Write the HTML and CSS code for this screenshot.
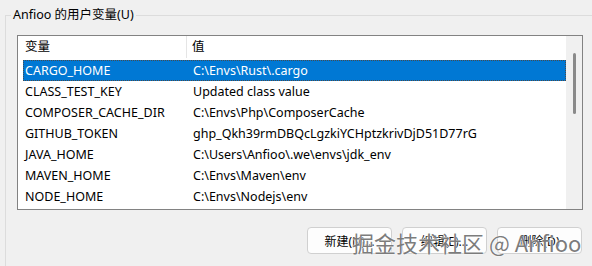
FILE: index.html
```html
<!DOCTYPE html>
<html lang="zh-CN">
<head>
<meta charset="utf-8">
<link rel="stylesheet" href="styles.css">
</head>
<body>
<fieldset class="group">
  <legend class="group-title">Anfioo 的用户变量(U)</legend>
  <div class="inner">
    <div class="list">
      <div class="list-main">
        <div class="list-head">
          <div class="hcell c1">变量</div>
          <div class="hcell c2">值</div>
        </div>
        <div class="rows">
          <div class="row sel"><span class="c1">CARGO_HOME</span><span class="c2">C:\Envs\Rust\.cargo</span></div>
          <div class="row"><span class="c1">CLASS_TEST_KEY</span><span class="c2">Updated class value</span></div>
          <div class="row"><span class="c1">COMPOSER_CACHE_DIR</span><span class="c2">C:\Envs\Php\ComposerCache</span></div>
          <div class="row"><span class="c1">GITHUB_TOKEN</span><span class="c2">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</span></div>
          <div class="row"><span class="c1">JAVA_HOME</span><span class="c2">C:\Users\Anfioo\.we\envs\jdk_env</span></div>
          <div class="row"><span class="c1">MAVEN_HOME</span><span class="c2">C:\Envs\Maven\env</span></div>
          <div class="row"><span class="c1">NODE_HOME</span><span class="c2">C:\Envs\Nodejs\env</span></div>
        </div>
      </div>
      <div class="scrollbar"><div class="thumb"></div></div>
    </div>
    <div class="buttons">
      <button class="btn">新建(N)...</button>
      <button class="btn">编辑(E)...</button>
      <button class="btn">删除(D)</button>
    </div>
  </div>
</fieldset>
<div class="watermark">掘金技术社区 @ Anfioo</div>
</body>
</html>
```

FILE: styles.css
```css
html, body {
  margin: 0;
  padding: 0;
}
body {
  width: 592px;
  height: 266px;
  overflow: hidden;
  background: #f0f0f0;
  font-family: "Noto Sans", "Noto Sans CJK SC", sans-serif;
  font-size: 12.5px;
  color: #000;
  position: relative;
}
.group {
  margin: 7px 0 0 5px;
  padding: 0 0 0 11px;
  border: 1px solid #dcdcdc;
  border-right: none;
  border-bottom: none;
  width: 587px;
  height: 259px;
  box-sizing: border-box;
}
.group-title {
  font-size: 12.5px;
  line-height: 16px;
  padding: 0 2px;
  margin-left: -6px;
}
.inner {
  width: 566px;
  padding-top: 12px;
}
.list {
  height: 175px;
  border: 1px solid #828282;
  background: #fff;
  display: flex;
  box-sizing: border-box;
}
.list-main {
  flex: 1;
  display: flex;
  flex-direction: column;
  overflow: hidden;
}
.list-head {
  display: flex;
  height: 22px;
  align-items: center;
  margin-bottom: 2px;
}
.hcell {
  height: 22px;
  line-height: 22px;
}
.hcell.c1 {
  width: 169px;
  padding-left: 7px;
  box-sizing: border-box;
  border-right: 1px solid #e5e5e5;
}
.hcell.c2 {
  padding-left: 5px;
}
.rows {
  display: flex;
  flex-direction: column;
  margin-left: 5px;
}
.row {
  display: flex;
  height: 21px;
  line-height: 21px;
  white-space: nowrap;
  box-sizing: border-box;
}
.row .c1 {
  width: 170px;
  padding-left: 2px;
  box-sizing: border-box;
}
.row.sel {
  background: #0078d4;
  color: #fff;
  border: 1px dotted #4a4a4a;
  line-height: 19px;
}
.row.sel .c1 {
  padding-left: 1px;
  width: 169px;
}
.scrollbar {
  width: 16px;
  background: #f0f0f0;
  display: flex;
  justify-content: center;
  padding-top: 17px;
  box-sizing: border-box;
}
.thumb {
  width: 3px;
  height: 61px;
  background: #8a8a8a;
  border-radius: 2px;
}
.buttons {
  display: flex;
  justify-content: flex-end;
  gap: 10px;
  margin-top: 17px;
  padding-right: 1px;
}
.btn {
  width: 85px;
  height: 27px;
  border: 1px solid #d0d0d0;
  border-radius: 4px;
  background: #fdfdfd;
  font-family: "Noto Sans", "Noto Sans CJK SC", sans-serif;
  font-size: 12px;
  color: #000;
  padding: 0;
}
.watermark {
  position: absolute;
  left: 352px;
  top: 228px;
  font-family: "Noto Sans CJK SC", sans-serif;
  font-size: 22px;
  line-height: 28px;
  color: rgba(100, 100, 100, 0.85);
  white-space: nowrap;
  text-shadow: 0 0 1px #fff, 0 0 2px #fff;
}
```
